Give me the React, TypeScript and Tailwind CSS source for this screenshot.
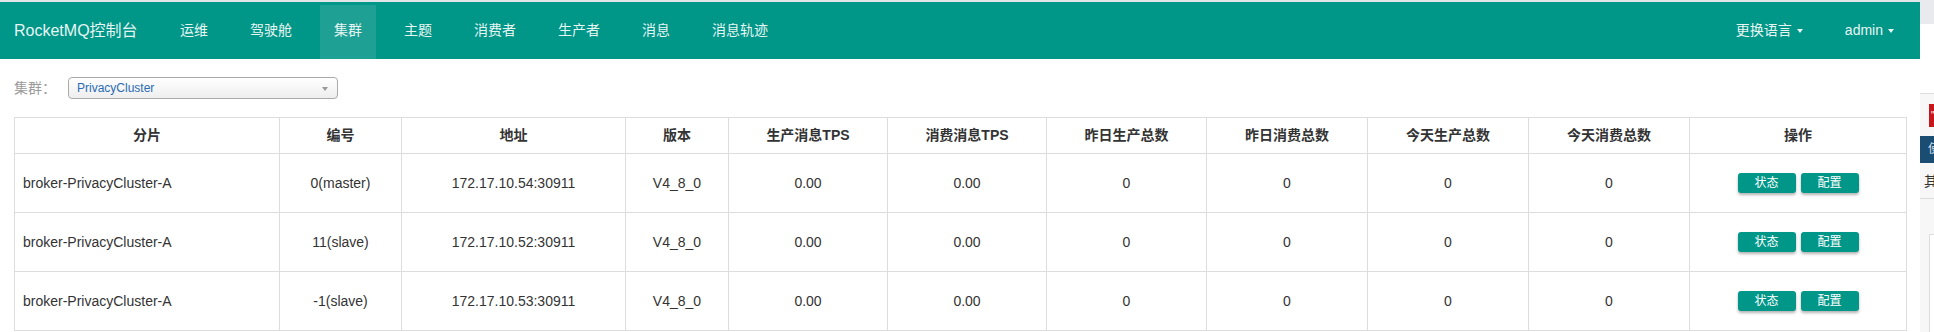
import React from 'react';

const navItems = ['运维', '驾驶舱', '集群', '主题', '消费者', '生产者', '消息', '消息轨迹'];

const headers = ['分片', '编号', '地址', '版本', '生产消息TPS', '消费消息TPS', '昨日生产总数', '昨日消费总数', '今天生产总数', '今天消费总数', '操作'];
const colWidths = [265, 122, 224, 103, 159, 159, 160, 161, 161, 161, 217];

const brokers = [
  { name: 'broker-PrivacyCluster-A', id: '0(master)', addr: '172.17.10.54:30911' },
  { name: 'broker-PrivacyCluster-A', id: '11(slave)', addr: '172.17.10.52:30911' },
  { name: 'broker-PrivacyCluster-A', id: '-1(slave)', addr: '172.17.10.53:30911' },
];

function Caret() {
  return <span className="inline-block ml-[5px] w-0 h-0 border-x-[3px] border-t-[4px] border-x-transparent border-t-[#e8f5f3] align-middle" />;
}

export default function App() {
  return (
    <div className="relative w-[1934px] h-[332px] overflow-hidden bg-white font-['Liberation_Sans','Noto_Sans_CJK_SC',sans-serif] text-[#333]">
      <div className="w-[1920px]">
        <div className="h-[2px] bg-[#e3e6e9]" />
        {/* 顶部导航 */}
        <nav className="h-[57px] bg-[#009688] flex items-stretch pl-[14px] pr-[12px] text-[#e8f5f3]">
          <div className="w-[152px] flex items-center text-[16px]">RocketMQ控制台</div>
          <ul className="flex gap-[14px] text-[14px]">
            {navItems.map((item) => (
              <li
                key={item}
                className={`px-[14px] flex items-center ${item === '集群' ? 'bg-[#1ea194] mt-[3px] pb-[3px]' : ''}`}
              >
                {item}
              </li>
            ))}
          </ul>
          <ul className="ml-auto flex gap-[14px] text-[14px]">
            <li className="px-[14px] flex items-center">
              更换语言
              <Caret />
            </li>
            <li className="px-[14px] flex items-center">
              admin
              <Caret />
            </li>
          </ul>
        </nav>

        <div className="px-[14px] pt-[18px]">
          {/* 集群选择 */}
          <div className="flex items-center h-[22px]">
            <span className="w-[54px] text-[14px] text-[#9a9a9a]">集群：</span>
            <div className="relative w-[270px] h-[22px] rounded-[4px] border border-[#aaa] bg-linear-to-b from-white to-[#eee] flex items-center pl-[8px] text-[12px] text-[#2a6cb5] shadow-[inset_0_1px_0_#fff]">
              PrivacyCluster
              <span className="absolute right-[9px] top-[9px] w-0 h-0 border-x-[3px] border-t-[4px] border-x-transparent border-t-[#999]" />
            </div>
          </div>

          {/* 集群表格 */}
          <table className="mt-[18px] w-[1892px] table-fixed border-collapse border border-[#ddd] text-[14px]">
            <colgroup>
              {colWidths.map((w, i) => (
                <col key={i} style={{ width: w }} />
              ))}
            </colgroup>
            <thead>
              <tr className="h-[36px]">
                {headers.map((h) => (
                  <th key={h} className="border border-[#ddd] font-bold text-center text-[#333] p-0">
                    {h}
                  </th>
                ))}
              </tr>
            </thead>
            <tbody>
              {brokers.map((b) => (
                <tr key={b.id} className="h-[59px]">
                  <td className="border border-[#ddd] pl-[8px] text-left">{b.name}</td>
                  <td className="border border-[#ddd] text-center">{b.id}</td>
                  <td className="border border-[#ddd] text-center">{b.addr}</td>
                  <td className="border border-[#ddd] text-center">V4_8_0</td>
                  <td className="border border-[#ddd] text-center">0.00</td>
                  <td className="border border-[#ddd] text-center">0.00</td>
                  <td className="border border-[#ddd] text-center">0</td>
                  <td className="border border-[#ddd] text-center">0</td>
                  <td className="border border-[#ddd] text-center">0</td>
                  <td className="border border-[#ddd] text-center">0</td>
                  <td className="border border-[#ddd]">
                    <div className="flex justify-center gap-[5px]">
                      <button className="w-[58px] h-[20px] rounded-[3px] bg-[#009688] text-white text-[12px] shadow-[0_2px_3px_rgba(0,0,0,0.3)]">状态</button>
                      <button className="w-[58px] h-[20px] rounded-[3px] bg-[#009688] text-white text-[12px] shadow-[0_2px_3px_rgba(0,0,0,0.3)]">配置</button>
                    </div>
                  </td>
                </tr>
              ))}
            </tbody>
          </table>
        </div>
      </div>

      {/* 右侧浮动面板（被窗口裁切） */}
      <div className="absolute left-[1920px] top-0 w-[60px] h-[332px] bg-[#f7f7f7]">
        <div className="h-[24px] bg-[#e8eaed]" />
        <div className="h-[70px] bg-white border-b border-[#ddd]" />
        <div className="ml-[9px] mt-[10px] w-[20px] h-[23px] bg-[#c8161d] text-white text-[10px] leading-[23px] pl-[2px]">"</div>
        <div className="mt-[9px] h-[27px] bg-[#1b4d72] text-[#cfe0ee] text-[12px] leading-[27px] pl-[8px]">使</div>
        <div className="h-[36px] pl-[4px] text-[14px] leading-[36px] text-[#333] border-b border-[#ddd]">其</div>
        <div className="ml-[9px] mt-[35px] h-[100px] bg-white border border-[#ddd]" />
      </div>
    </div>
  );
}
